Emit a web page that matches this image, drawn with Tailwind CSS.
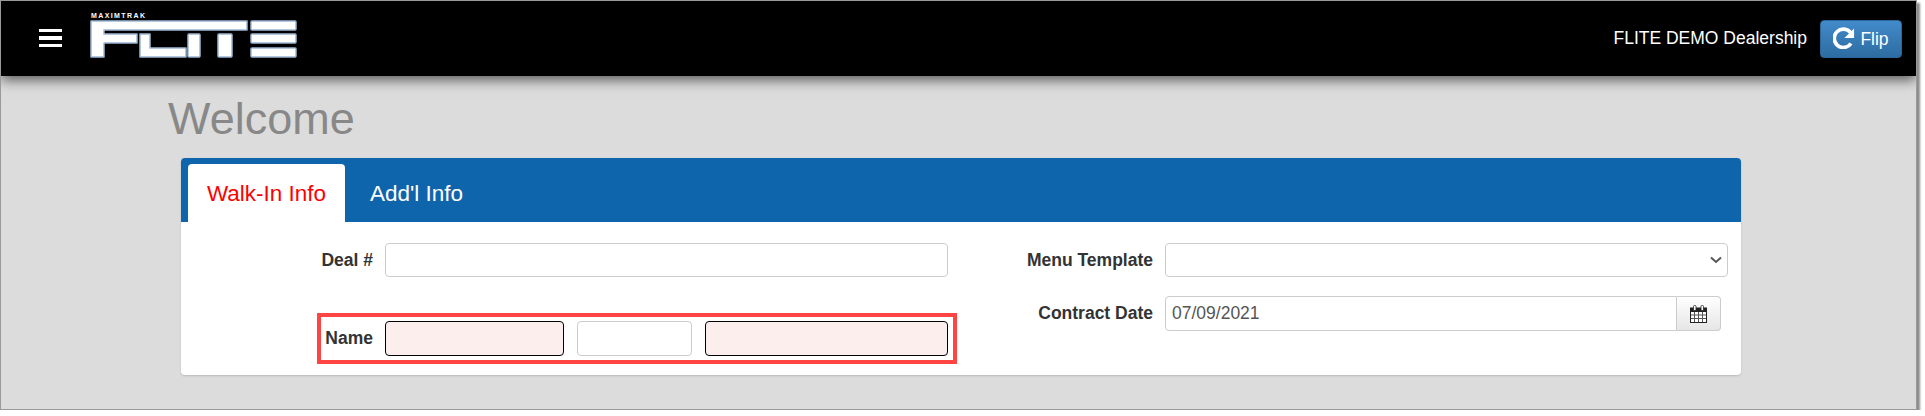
<!DOCTYPE html>
<html>
<head>
<meta charset="utf-8">
<script src="https://cdn.jsdelivr.net/npm/@tailwindcss/browser@4"></script>
</head>
<body class="bg-white font-['Liberation_Sans',Arial,sans-serif] overflow-hidden">
<div class="w-[1917px] h-[410px] bg-[#dcdcdc] border border-[#9a9a9a] shadow-[3px_3px_2px_rgba(0,0,0,0.45)] overflow-hidden">
  <header class="relative z-10 h-[75px] bg-black flex items-center shadow-[0_4px_12px_rgba(0,0,0,0.6)]">
    <div class="ml-[38px] w-[23px] flex flex-col gap-[4px] mb-[1px]">
      <span class="block h-[3.5px] bg-white"></span>
      <span class="block h-[3.5px] bg-white"></span>
      <span class="block h-[3.5px] bg-white"></span>
    </div>
    <div class="relative ml-[28px] w-[210px] h-[60px]">
      <span class="absolute left-[1px] top-[3px] text-[7px] leading-[7px] font-bold text-white tracking-[1.4px] whitespace-nowrap">MAXIMTRAK</span>
      <svg class="absolute left-0 top-0" width="210" height="60" viewBox="0 0 210 60">
        <g fill="#fff" stroke="#9db8d4" stroke-width="1.5" stroke-linejoin="round">
          <path d="M1 12H157V21H14V25H47V34H14V48H1Z"/>
          <path d="M50 25H60V39H96V48H50Z"/>
          <rect x="98" y="25" width="12" height="23" rx="1"/>
          <rect x="128" y="25" width="14" height="23" rx="1"/>
          <rect x="161" y="12" width="45" height="9" rx="1"/>
          <rect x="161" y="25" width="45" height="9" rx="1"/>
          <rect x="161" y="39" width="45" height="9" rx="1"/>
        </g>
      </svg>
    </div>
    <div class="ml-auto flex items-center">
      <span class="text-white text-[17.5px] mr-[13px] mb-[1px]">FLITE DEMO Dealership</span>
      <button class="h-[38px] w-[82px] mr-[14px] mt-[1px] rounded-[4px] border border-[#2b669a] bg-gradient-to-b from-[#428bca] to-[#2d6ca2] text-white text-[17.5px] flex items-center justify-center gap-[5px]">
        <svg width="22" height="22" viewBox="0 0 24 24" class="mb-[3px]"><path d="M19.2 6.2A10 10 0 1 0 19.6 18" fill="none" stroke="#fff" stroke-width="4"/><path d="M23 1.5V12H12.5Z" fill="#fff"/></svg>
        <span class="mt-[1px]">Flip</span>
      </button>
    </div>
  </header>

  <h1 class="ml-[167px] mt-[19px] text-[45px] leading-[48px] text-[#888888] font-normal">Welcome</h1>

  <section class="ml-[180px] mt-[15px] w-[1560px] h-[217px] bg-white rounded-[4px] shadow-[0_1px_2px_rgba(0,0,0,0.15)] overflow-hidden relative">
    <div class="h-[64px] bg-[#0f65ac] flex items-end pl-[7px]">
      <div class="h-[58px] w-[157px] pt-[1px] bg-white rounded-t-[4px] flex items-center justify-center text-[#ff0000] text-[22.5px]">Walk-In Info</div>
      <div class="h-[58px] w-[143px] pt-[1px] flex items-center justify-center text-white text-[22.5px]">Add'l Info</div>
    </div>
    <div class="flex pt-[21px]">
      <div class="w-[767px] flex flex-col">
        <div class="flex items-center">
          <label class="w-[192px] text-right text-[17.5px] font-bold text-[#333333]">Deal #</label>
          <input class="ml-[12px] w-[563px] h-[34px] border border-[#cccccc] rounded-[4px] bg-white">
        </div>
        <div class="flex items-center mt-[44px]">
          <label class="w-[192px] text-right text-[17.5px] font-bold text-[#333333]">Name</label>
          <input class="ml-[12px] w-[179px] h-[35px] border border-black rounded-[4px] bg-[#fdeeee]">
          <input class="ml-[13px] w-[115px] h-[35px] border border-[#cccccc] rounded-[4px] bg-white">
          <input class="ml-[13px] w-[243px] h-[35px] border border-black rounded-[4px] bg-[#fdeeee]">
        </div>
      </div>
      <div class="flex-1 flex flex-col gap-[19px]">
        <div class="flex items-center">
          <label class="w-[205px] text-right text-[17.5px] font-bold text-[#333333]">Menu Template</label>
          <div class="relative ml-[12px]">
            <select class="block w-[563px] h-[34px] border border-[#cccccc] rounded-[4px] bg-white appearance-none"><option></option></select>
            <svg class="absolute right-[6px] top-[13px]" width="12" height="8" viewBox="0 0 12 8"><path d="M1 1.5L6 6L11 1.5" fill="none" stroke="#555555" stroke-width="2"/></svg>
          </div>
        </div>
        <div class="flex items-center">
          <label class="w-[205px] text-right text-[17.5px] font-bold text-[#333333]">Contract Date</label>
          <div class="ml-[12px] flex h-[35px]">
            <input value="07/09/2021" class="w-[512px] h-[35px] border border-[#cccccc] rounded-l-[4px] px-[6px] text-[17.5px] text-[#555555] bg-white">
            <div class="w-[44px] h-[35px] border border-l-0 border-[#cccccc] rounded-r-[4px] bg-gradient-to-b from-white to-[#e6e6e6] flex items-center justify-center">
              <svg width="17" height="18" viewBox="0 0 17 18">
                <rect x="0.5" y="3" width="16" height="14.5" fill="#fff" stroke="#222"/>
                <rect x="0.5" y="3" width="16" height="4" fill="#222"/>
                <path d="M1 10H16M1 13.5H16M4.5 7V17M8.5 7V17M12.5 7V17" stroke="#555" stroke-width="1" fill="none"/>
                <rect x="3.5" y="0.5" width="2.5" height="5" rx="1" fill="#fff" stroke="#222" stroke-width="0.8"/>
                <rect x="11" y="0.5" width="2.5" height="5" rx="1" fill="#fff" stroke="#222" stroke-width="0.8"/>
              </svg>
            </div>
          </div>
        </div>
      </div>
    </div>
    <div class="absolute left-[136px] top-[155px] w-[640px] h-[51px] border-[4px] border-[#ff4444] pointer-events-none"></div>
  </section>
</div>
</body>
</html>
